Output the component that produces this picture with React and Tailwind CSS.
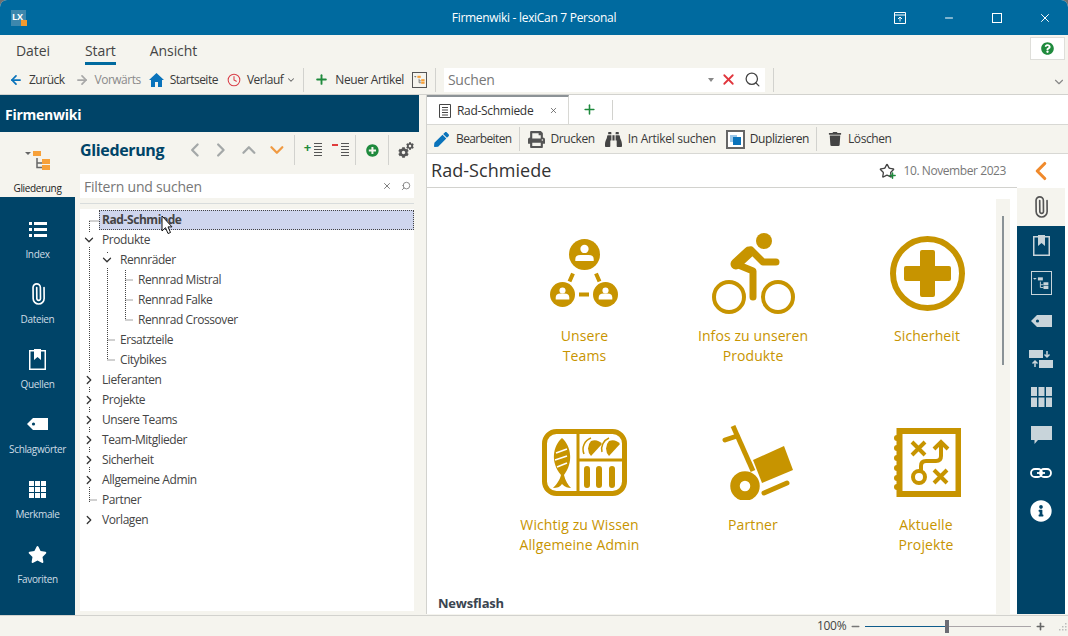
import { ArrowLeft, ArrowRight, ChevronDown, ChevronLeft, ChevronRight, ChevronUp, Clock, Plus, Minus, X, Search, Paperclip, Star } from 'lucide-react';
import { FaBinoculars, FaCog, FaInfoCircle, FaPen, FaPlusCircle, FaPrint, FaQuestionCircle, FaStar, FaTrash } from 'react-icons/fa';

const GOLD = '#c79400';

const OutlineGlyph = ({ className = '', dark = '#555', orange = '#f7a13a' }) => (
  <svg viewBox="0 0 26 20" className={className}>
    <path d="M0 1h6L3 4z" fill={dark} />
    <rect x="8" y="0" width="8" height="5" fill={orange} />
    <path d="M12 7v9.500h5M12 12h5" fill="none" stroke={dark} strokeWidth="1.500" />
    <rect x="17" y="8" width="8" height="5" fill={orange} />
    <rect x="17" y="14" width="8" height="5" fill={orange} />
  </svg>
);

const HouseIcon = () => (
  <svg viewBox="0 0 15 14" className="w-[15px] h-[14px]" fill="#0a73bb">
    <path d="M7.500 0L15 7h-2v7H9V9H6v5H2V7H0z" />
  </svg>
);

const ListIcon = () => (
  <svg viewBox="0 0 18 15" className="w-[18px] h-[15px]" fill="currentColor">
    <path d="M0 0h3v3H0zM5 0h13v3H5zM0 6h3v3H0zM5 6h13v3H5zM0 12h3v3H0zM5 12h13v3H5z" />
  </svg>
);

const BookIcon = () => (
  <svg viewBox="0 0 17 21" className="w-[17px] h-[21px]">
    <rect x="0.750" y="1.750" width="15.500" height="18.500" fill="none" stroke="currentColor" strokeWidth="1.500" />
    <path d="M5 0h7v11L8.500 8 5 11z" fill="currentColor" />
  </svg>
);

const TagIcon = () => (
  <svg viewBox="0 0 21 12" className="w-[21px] h-[12px]">
    <path d="M6 0h15v12H6L0 6z" fill="currentColor" />
    <circle cx="6.500" cy="6" r="1.600" fill="#004468" />
  </svg>
);

const GridIcon = () => (
  <svg viewBox="0 0 17 17" className="w-[17px] h-[17px]" fill="currentColor">
    {[0, 6, 12].map((y) => [0, 6, 12].map((x) => <rect key={`${x}-${y}`} x={x} y={y} width="5" height="5" />))}
  </svg>
);

const TeamIcon = () => {
  const person = (cx, cy, s) => (
    <g fill="#fff">
      <circle cx={cx} cy={cy - 3.500 * s} r={3.600 * s} />
      <path d={`M${cx - 8 * s} ${cy + 7 * s} v-2 q0 -4 5 -4 h${16 * s - 10} q5 0 5 4 v2 z`} />
    </g>
  );
  return (
    <svg viewBox="0 0 69 68" className="w-[69px] h-[68px]">
      <g fill={GOLD}>
        <circle cx="34.500" cy="15.500" r="15.500" />
        <circle cx="12.500" cy="55.500" r="12.500" />
        <circle cx="55.500" cy="55.500" r="12.500" />
      </g>
      {person(34.500, 14, 1.150)}
      {person(12.500, 54.500, 0.850)}
      {person(55.500, 54.500, 0.850)}
      <path d="M23 34.500l-3.500 8M46 34.500l3.500 8M29 55.500h10" stroke={GOLD} strokeWidth="4" fill="none" />
    </svg>
  );
};

const BikeIcon = () => (
  <svg viewBox="0 0 83 81" className="w-[83px] h-[81px]">
    <g fill="none" stroke={GOLD} strokeLinecap="round" strokeLinejoin="round">
      <circle cx="17" cy="64" r="15" strokeWidth="4" />
      <circle cx="66" cy="64" r="15" strokeWidth="4" />
      <path d="M24 31l17 7v26" strokeWidth="7" />
      <path d="M37 19L24 31" strokeWidth="11" />
      <path d="M39 17l12 12h13" strokeWidth="7" />
    </g>
    <circle cx="52" cy="8" r="8" fill={GOLD} />
  </svg>
);

const SafetyIcon = () => (
  <svg viewBox="0 0 75 75" className="w-[75px] h-[75px]">
    <circle cx="37.500" cy="37.500" r="34.500" fill="none" stroke={GOLD} strokeWidth="6" />
    <path d="M30 16a2 2 0 0 1 2-2h11a2 2 0 0 1 2 2v14h14a2 2 0 0 1 2 2v11a2 2 0 0 1-2 2H45v14a2 2 0 0 1-2 2H32a2 2 0 0 1-2-2V45H16a2 2 0 0 1-2-2V32a2 2 0 0 1 2-2h14z" fill={GOLD} />
  </svg>
);

const LunchIcon = () => (
  <svg viewBox="0 0 85 67" className="w-[85px] h-[67px]">
    <rect x="2.500" y="2.500" width="80" height="62" rx="12" fill="none" stroke={GOLD} strokeWidth="5" />
    <path d="M36 3v61M36 31h46" stroke={GOLD} strokeWidth="3" fill="none" />
    <path d="M20 9C29 17 32 33 22 46c1 5 4 10 7 13-3 0-6-1-9-4-2 3-5 4-9 4 3-3 7-8 8-13C8 33 11 17 20 9z" fill={GOLD} />
    <path d="M14 24l11-4M13 31l12-4M15 38l10-4" stroke="#fff" strokeWidth="1.500" fill="none" />
    <g fill={GOLD}>
      <path d="M49 12a10 10 0 0 1 11 3L49 27a11 11 0 0 1 0-15z" />
      <path d="M67 12a10 10 0 0 1 11 3L67 27a11 11 0 0 1 0-15z" />
    </g>
    <path d="M49 9a12 12 0 0 0-7 16M67 9a12 12 0 0 0-7 14" stroke={GOLD} strokeWidth="1.500" fill="none" />
    <g stroke={GOLD} strokeWidth="6" strokeLinecap="round">
      <path d="M45 40v16M57 40v16M70 40v16" />
    </g>
  </svg>
);

const CartIcon = () => (
  <svg viewBox="0 0 71 75" className="w-[71px] h-[75px] ml-[8px]">
    <g fill="none" stroke={GOLD} strokeLinecap="round">
      <path d="M11 1l20 45" strokeWidth="5" strokeLinecap="butt" />
      <path d="M3 15l12-4" strokeWidth="5" />
      <path d="M42 68l23-10" strokeWidth="5" />
      <circle cx="23" cy="61" r="10" strokeWidth="9.500" />
    </g>
    <path d="M31 35l31-14 9 24-31 13z" fill={GOLD} />
  </svg>
);

const MapIcon = () => (
  <svg viewBox="0 0 67 69" className="w-[67px] h-[69px]">
    <rect x="5.500" y="3" width="59" height="63" fill="none" stroke={GOLD} strokeWidth="6" />
    <g fill={GOLD}>
      {[10, 20, 30, 40, 50, 59].map((y) => <circle key={y} cx="3" cy={y} r="3" />)}
    </g>
    <g fill="none" stroke={GOLD} strokeWidth="4">
      <path d="M18 14l13 13M31 14L18 27M40 42l13 13M53 42L40 55" />
      <circle cx="25" cy="49" r="6" />
      <path d="M27 43v-5q0-5 5-5h10q5 0 5-5V15M40 21l7-7 7 7" />
    </g>
  </svg>
);

const Tile = ({ icon, lines, labelClass = '' }) => (
  <div className="flex flex-col items-center">
    <div className="h-[82px] flex items-center justify-center">{icon}</div>
    <div className={`mt-[12px] h-[40px] text-center text-[14px] leading-[20px] text-[#c79400] tracking-[0.1px] ${labelClass}`}>
      {lines.map((l) => <div key={l}>{l}</div>)}
    </div>
  </div>
);

const TREE = [
  { t: 'Rad-Schmiede', l: 0, sel: true },
  { t: 'Produkte', l: 0, c: 'down' },
  { t: 'Rennräder', l: 1, c: 'down' },
  { t: 'Rennrad Mistral', l: 2 },
  { t: 'Rennrad Falke', l: 2 },
  { t: 'Rennrad Crossover', l: 2 },
  { t: 'Ersatzteile', l: 1 },
  { t: 'Citybikes', l: 1 },
  { t: 'Lieferanten', l: 0, c: 'right' },
  { t: 'Projekte', l: 0, c: 'right' },
  { t: 'Unsere Teams', l: 0, c: 'right' },
  { t: 'Team-Mitglieder', l: 0, c: 'right' },
  { t: 'Sicherheit', l: 0, c: 'right' },
  { t: 'Allgemeine Admin', l: 0, c: 'right' },
  { t: 'Partner', l: 0 },
  { t: 'Vorlagen', l: 0, c: 'right' },
];

const LEVEL = ['pl-[3px]', 'pl-[21px]', 'pl-[39px]'];

const NAV = [
  { label: 'Index', icon: <ListIcon /> },
  { label: 'Dateien', icon: <Paperclip size={22} className="-rotate-45" strokeWidth={1.800} /> },
  { label: 'Quellen', icon: <BookIcon /> },
  { label: 'Schlagwörter', icon: <TagIcon /> },
  { label: 'Merkmale', icon: <GridIcon /> },
  { label: 'Favoriten', icon: <FaStar size={19} /> },
];

const Sep = ({ className = 'h-[24px]' }) => <div className={`w-px bg-[#d2d2ce] ${className}`} />;

const Tool = ({ icon, label, className = '', muted }) => (
  <div className={`flex items-center gap-[6px] whitespace-nowrap ${className}`}>
    {icon}
    <span className={muted ? 'text-[#8a8a8a]' : 'text-[#3a3a3a]'}>{label}</span>
  </div>
);

export default function App() {
  return (
    <div className="w-[1068px] h-[636px] bg-[#707070] overflow-hidden" style={{ fontFamily: '"Open Sans", "Noto Sans", sans-serif' }}>
      <div className="w-full h-full rounded-t-[7px] overflow-hidden bg-[#f5f4ee] flex flex-col relative">
        {/* title bar */}
        <div className="h-[35px] bg-[#006a9f] flex items-center relative shrink-0">
          <div className="ml-[11px] w-[15px] h-[16px] bg-[#3d87ad] relative text-[9px] font-bold text-white leading-[14px] pl-[1px]">
            LX
            <span className="absolute right-[-1px] bottom-[0px] w-[6px] h-[6px] bg-[#f39a2d]" />
          </div>
          <div className="absolute inset-0 flex items-center justify-center text-[12px] text-white tracking-[-0.3px]">Firmenwiki - lexiCan 7 Personal</div>
          <div className="flex items-center text-white ml-auto mr-[16px] relative">
            <svg viewBox="0 0 12 12" className="w-[12px] h-[12px]"><path d="M.5.5h11v11H.500zM.5 3h11M6 9.500V5M4 7l2-2 2 2" fill="none" stroke="#fff" /></svg>
            <Minus size={12} className="ml-[37px]" strokeWidth={2} />
            <svg viewBox="0 0 10 10" className="w-[10px] h-[10px] ml-[37px]"><rect x="0.500" y="0.500" width="9" height="9" fill="none" stroke="#fff" /></svg>
            <X size={14} className="ml-[36px]" strokeWidth={1.700} />
          </div>
        </div>

        {/* menu */}
        <div className="h-[30px] flex items-start shrink-0 text-[14px] text-[#444] relative tracking-[-0.1px]">
          <span className="ml-[16px] mt-[5px]">Datei</span>
          <div className="ml-[35px] mt-[5px] flex flex-col items-center">
            <span>Start</span>
            <div className="w-[31px] h-[3px] bg-[#006a9f] mt-[1px]" />
          </div>
          <span className="ml-[34px] mt-[5px]">Ansicht</span>
          <div className="absolute left-[1030px] top-[2px] w-[35px] h-[23px] bg-white border border-[#dededa] flex items-center justify-center">
            <FaQuestionCircle size={13} className="text-[#1f8a3d]" />
          </div>
        </div>

        {/* toolbar */}
        <div className="h-[30px] flex items-center shrink-0 text-[12px] tracking-[-0.5px] border-b border-[#d2d2ce]">
          <Tool className="ml-[9px]" icon={<ArrowLeft size={14} strokeWidth={3} className="text-[#0a73bb]" />} label="Zurück" />
          <Tool className="ml-[10px]" muted icon={<ArrowRight size={14} strokeWidth={3} className="text-[#a8a8a8]" />} label="Vorwärts" />
          <Tool className="ml-[8px]" icon={<HouseIcon />} label="Startseite" />
          <Tool className="ml-[9px]" icon={<Clock size={14} strokeWidth={1.800} className="text-[#d9404a]" />} label="Verlauf" />
          <ChevronDown size={10} className="ml-[3px] text-[#666]" strokeWidth={2.500} />
          <Sep className="h-[24px] ml-[7px]" />
          <Tool className="ml-[10px] gap-[5px] tracking-[-0.4px]" icon={<Plus size={15} strokeWidth={3} className="text-[#1f8a3d]" />} label="Neuer Artikel" />
          <div className="ml-[8px] w-[15px] h-[16px] border border-[#555] flex items-center justify-center"><OutlineGlyph className="w-[11px] h-[12px]" /></div>
          <Sep className="h-[24px] ml-[8px]" />
          <div className="ml-[8px] w-[321px] h-[24px] bg-white flex items-center text-[14px] text-[#777] tracking-[-0.2px]">
            <span className="ml-[4px] flex-1">Suchen</span>
            <svg viewBox="0 0 6 4" className="w-[6px] h-[4px]"><path d="M0 0h6L3 4z" fill="#888" /></svg>
            <X size={17} strokeWidth={2.500} className="ml-[6px] text-[#e0353c]" />
            <Search size={17} strokeWidth={1.800} className="ml-[7px] mr-[4px] text-[#444]" />
          </div>
          <Sep className="h-[24px] ml-[8px]" />
          <ChevronDown size={14} className="ml-auto mr-[2px] mt-[5px] text-[#888]" />
        </div>

        {/* main */}
        <div className="flex-1 flex min-h-0">
          {/* left panel */}
          <div className="w-[419px] flex flex-col shrink-0">
            <div className="h-[37px] bg-[#004468] text-white font-bold text-[14px] flex items-center pl-[5px] pt-[1px] tracking-[-0.25px] shrink-0">Firmenwiki</div>
            <div className="flex-1 flex min-h-0">
              <div className="w-[75px] bg-[#004468] shrink-0 flex flex-col">
                <div className="h-[65px] bg-[#f5f4ee] flex flex-col items-center">
                  <OutlineGlyph className="w-[26px] h-[20px] mt-[19px] ml-[1px]" dark="#666" />
                  <span className="text-[10px] text-[#222] mt-[11px] leading-[12px] tracking-[-0.35px]">Gliederung</span>
                </div>
                {NAV.map((n) => (
                  <div key={n.label} className="h-[65px] flex flex-col items-center text-white">
                    <div className="h-[24px] mt-[20px] flex items-center">{n.icon}</div>
                    <span className="text-[10px] text-[#cfdde6] mt-[7px] leading-[12px] tracking-[-0.35px]">{n.label}</span>
                  </div>
                ))}
              </div>
              <div className="w-[344px] pl-[5px] pr-[5px] flex flex-col min-h-0">
                <div className="h-[42px] pb-[6px] flex items-center shrink-0 text-[#9aa0a0]">
                  <span className="text-[16px] font-bold text-[#004468] tracking-[-0.35px] w-[105px]">Gliederung</span>
                  <ChevronLeft size={22} strokeWidth={2.500} className="text-[#a4a8a8]" />
                  <ChevronRight size={22} strokeWidth={2.500} className="ml-[4px] text-[#a4a8a8]" />
                  <ChevronUp size={22} strokeWidth={2.500} className="ml-[7px] text-[#a4a8a8]" />
                  <ChevronDown size={22} strokeWidth={2.500} className="ml-[6px] text-[#f09a42]" />
                  <Sep className="h-[30px] ml-[6px]" />
                  <div className="ml-[9px] w-[18px] h-[16px] relative">
                    <span className="absolute left-0 top-0 text-[#1f8a3d] text-[13px] font-bold leading-[10px]">+</span>
                    <div className="absolute right-0 top-[1px] w-[8px] h-[14px] bg-[repeating-linear-gradient(#555_0_1px,transparent_1px_3px)]" />
                  </div>
                  <div className="ml-[10px] w-[18px] h-[16px] relative">
                    <span className="absolute left-0 top-[2px] w-[6px] h-[2px] bg-[#e03c3c]" />
                    <div className="absolute right-0 top-[1px] w-[8px] h-[14px] bg-[repeating-linear-gradient(#555_0_1px,transparent_1px_3px)]" />
                  </div>
                  <Sep className="h-[30px] ml-[6px]" />
                  <FaPlusCircle size={13} className="ml-[10px] text-[#1f8a3d]" />
                  <Sep className="h-[30px] ml-[9px]" />
                  <div className="ml-[9px] w-[16px] h-[16px] relative text-[#555]">
                    <FaCog size={11} className="absolute left-0 bottom-0" />
                    <FaCog size={8} className="absolute right-0 top-0" />
                  </div>
                </div>
                <div className="h-[24px] bg-white flex items-center text-[14px] text-[#777] shrink-0 tracking-[-0.2px]">
                  <span className="ml-[4px] flex-1">Filtern und suchen</span>
                  <X size={10} strokeWidth={2} className="text-[#666] mr-[9px]" />
                  <Search size={10} strokeWidth={2} className="text-[#777] mr-[3px] scale-x-[-1]" />
                </div>
                <div className="h-px bg-[#d8dcdc] mt-[5px] shrink-0" />
                <div className="relative bg-white mt-[5px] mb-[4px] w-[334px] flex-1 pt-[1px]">
                  <svg className="absolute left-0 top-0 w-[60px] h-[320px]" viewBox="0 0 60 320">
                    <path d="M9.500 12V294M9.500 12H19M9.500 291H17M27.500 43V151M27.500 131H35M27.500 151H35M45.500 61V111M45.500 71H53M45.500 91H53M45.500 111H53" fill="none" stroke="#444" strokeDasharray="1 1" />
                  </svg>
                  {TREE.map((r) => (
                    <div key={r.t} className={`h-[20px] flex items-center relative text-[12px] tracking-[-0.42px] text-[#444] ${LEVEL[r.l]}`}>
                      <div className="w-[12px] h-[12px] flex items-center justify-center">
                        {r.c === 'down' && <ChevronDown size={14} strokeWidth={2.200} className="bg-white text-[#333] shrink-0" />}
                        {r.c === 'right' && <ChevronRight size={14} strokeWidth={2.200} className="bg-white text-[#333] shrink-0" />}
                      </div>
                      {r.sel ? (
                        <div className="ml-[4px] h-[20px] w-[315px] bg-[#cfd6ee] border border-dotted border-[#444] pl-[2px] flex items-center font-bold">{r.t}</div>
                      ) : (
                        <span className="ml-[7px]">{r.t}</span>
                      )}
                    </div>
                  ))}
                  <svg viewBox="0 0 12 20" className="absolute left-[81px] top-[6px] w-[12px] h-[20px]">
                    <path d="M1 1v15l3.500-3.300 2.500 5.800 2.500-1-2.500-5.600H11z" fill="#fff" stroke="#111" />
                  </svg>
                </div>
              </div>
            </div>
          </div>

          {/* right panel */}
          <div className="flex-1 ml-[7px] bg-white flex flex-col min-w-0 border-l border-[#d2d2ce] mb-[1px]">
            <div className="h-[29px] flex items-stretch shrink-0 text-[12px] tracking-[-0.3px] text-[#333]">
              <div className="w-[142px] border-t-[2px] border-t-[#8c9296] border-r border-r-[#d8d8d4] flex items-center">
                <svg viewBox="0 0 12 14" className="w-[12px] h-[14px] ml-[12px]"><path d="M.5.5h11v13H.5zM3 3.500h6M3 6h6M3 8.500h6M3 11h6" fill="none" stroke="#444" /></svg>
                <span className="ml-[6px]">Rad-Schmiede</span>
                <X size={9} strokeWidth={2} className="ml-[16px] text-[#555]" />
              </div>
              <Plus size={15} strokeWidth={2.500} className="ml-[13px] self-center text-[#1f8a3d]" />
              <Sep className="h-[20px] self-center ml-[15px]" />
            </div>
            <div className="h-[30px] bg-[#f5f4ee] border-y border-[#d8d8d4] flex items-center shrink-0 text-[12px] tracking-[-0.42px] text-[#333]">
              <Tool className="ml-[7px] gap-[7px] tracking-[-0.6px]" icon={<FaPen size={15} className="text-[#0a73bb]" />} label="Bearbeiten" />
              <Sep className="h-[24px] ml-[7px]" />
              <Tool className="ml-[8px]" icon={<FaPrint size={17} className="text-[#555]" />} label="Drucken" />
              <Tool className="ml-[10px] gap-[5px] tracking-[-0.3px]" icon={<FaBinoculars size={17} className="text-[#444]" />} label="In Artikel suchen" />
              <div className="ml-[10px] w-[19px] h-[19px] border-[2px] border-[#666] bg-white relative">
                <span className="absolute left-[2px] top-[3px] w-[7px] h-[7px] bg-[#9cc8ea]" />
                <span className="absolute left-[5px] top-[5px] w-[8px] h-[8px] bg-[#0a73bb]" />
              </div>
              <span className="ml-[5px]">Duplizieren</span>
              <Sep className="h-[24px] ml-[7px]" />
              <Tool className="ml-[11px]" icon={<FaTrash size={14} className="text-[#444]" />} label="Löschen" />
            </div>
            <div className="flex-1 flex min-h-0">
              <div className="flex-1 flex flex-col min-w-0">
                <div className="h-[34px] border-b border-[#d2d2ce] flex items-center shrink-0">
                  <span className="ml-[4px] text-[18px] text-[#333] tracking-[0.05px] flex-1">Rad-Schmiede</span>
                  <div className="relative w-[16px] h-[16px] mr-[9px]">
                    <Star size={16} strokeWidth={2} className="text-[#444]" />
                    <Plus size={9} strokeWidth={4} className="absolute right-[-2px] bottom-[-1px] text-[#1f8a3d]" />
                  </div>
                  <span className="mr-[11px] text-[12px] text-[#777] tracking-[-0.42px]">10. November 2023</span>
                </div>
                <div className="flex-1 flex min-h-0 relative overflow-hidden">
                  <div className="flex-1 flex flex-col min-w-0 pt-[44px]">
                    <div className="grid grid-cols-[169px_168px_180px] ml-[73px] gap-y-[55px]">
                      <Tile icon={<TeamIcon />} lines={['Unsere', 'Teams']} />
                      <Tile icon={<BikeIcon />} lines={['Infos zu unseren', 'Produkte']} />
                      <Tile icon={<SafetyIcon />} lines={['Sicherheit']} />
                      <Tile icon={<LunchIcon />} lines={['Wichtig zu Wissen', 'Allgemeine Admin']} labelClass="-translate-x-[5px]" />
                      <Tile icon={<CartIcon />} lines={['Partner']} />
                      <Tile icon={<MapIcon />} lines={['Aktuelle', 'Projekte']} labelClass="-translate-x-[1px]" />
                    </div>
                    <div className="mt-[39px] ml-[11px] text-[13px] font-bold text-[#3a4450] tracking-[-0.2px]">Newsflash</div>
                  </div>
                  <div className="w-[14px] mr-[7px] mt-[11px] bg-[#f5f4ee] flex justify-center shrink-0">
                    <div className="w-[2px] h-[149px] mt-[17px] bg-[#8a9296]" />
                  </div>
                </div>
              </div>
              {/* right rail */}
              <div className="w-[51px] shrink-0 flex flex-col">
                <div className="h-[34px] flex items-center pl-[9px] shrink-0">
                  <ChevronLeft size={30} strokeWidth={2.500} className="text-[#f08a2c]" />
                </div>
                <div className="w-[48px] h-[38px] bg-[#f5f4ee] flex items-center justify-center shrink-0">
                  <Paperclip size={22} strokeWidth={1.800} className="-rotate-45 text-[#555]" />
                </div>
                <div className="w-[48px] flex-1 bg-[#004468] flex flex-col items-center text-[#c8d4da]">
                  <div className="h-[38px] flex items-center"><BookIcon /></div>
                  <div className="h-[38px] flex items-center"><div className="w-[21px] h-[24px] border-[1.500px] border-[#c8d4da] flex items-center justify-center"><OutlineGlyph className="w-[16px] h-[15px]" dark="#c8d4da" orange="#c8d4da" /></div></div>
                  <div className="h-[38px] flex items-center"><TagIcon /></div>
                  <div className="h-[38px] flex items-center">
                    <svg viewBox="0 0 24 18" className="w-[24px] h-[18px]"><path d="M0 0h14v8H0zM10 10h14v8H10z" fill="#c8d4da" /><path d="M18 1v6M15.500 4.500L18 7l2.500-2.500M6 17v-6M3.500 13.500L6 11l2.500 2.500" fill="none" stroke="#c8d4da" strokeWidth="1.500" /></svg>
                  </div>
                  <div className="h-[38px] flex items-center">
                    <svg viewBox="0 0 21 20" className="w-[21px] h-[20px]" fill="currentColor">
                      <path d="M0 0h6v9H0zM7.500 0h6v9h-6zM15 0h6v9h-6zM0 10.500h6V20H0zM7.500 10.500h6V20h-6zM15 10.500h6V20h-6z" />
                    </svg>
                  </div>
                  <div className="h-[38px] flex items-center">
                    <svg viewBox="0 0 21 18" className="w-[21px] h-[18px]" fill="currentColor"><path d="M0 0h21v14H7l-3.500 4v-4H0z" /></svg>
                  </div>
                  <div className="h-[38px] flex items-center">
                    <svg viewBox="0 0 22 10" className="w-[22px] h-[10px]"><g fill="none" stroke="#fff" strokeWidth="1.800"><rect x="1" y="1" width="11" height="8" rx="4" /><rect x="10" y="1" width="11" height="8" rx="4" /><path d="M7 5h8" /></g></svg>
                  </div>
                  <div className="h-[38px] flex items-center"><FaInfoCircle size={22} className="text-white" /></div>
                </div>
              </div>
            </div>
          </div>
        </div>

        {/* status bar */}
        <div className="h-[21px] border-t border-[#d2d2ce] flex items-center shrink-0 text-[12px] text-[#444] tracking-[-0.3px]">
          <span className="ml-[817px] w-[30px]">100%</span>
          <Minus size={11} strokeWidth={3.500} className="ml-[3px] text-[#777]" />
          <div className="ml-[4px] w-[166px] h-[13px] flex items-center">
            <div className="w-[80px] h-px bg-[#0f5c8c]" />
            <div className="w-[4px] h-[13px] bg-[#6c6c74]" />
            <div className="flex-1 h-px bg-[#aaa5a8]" />
          </div>
          <Plus size={11} strokeWidth={3.500} className="ml-[4px] text-[#666]" />
          <svg viewBox="0 0 10 10" className="w-[10px] h-[10px] ml-[11px] mt-[4px]" fill="#bbb">
            <path d="M8 0h1.500v1.500H8zM5 3h1.500v1.500H5zM8 3h1.500v1.500H8zM2 6h1.500v1.500H2zM5 6h1.500v1.500H5zM8 6h1.500v1.500H8z" />
          </svg>
        </div>
      </div>
    </div>
  );
}
